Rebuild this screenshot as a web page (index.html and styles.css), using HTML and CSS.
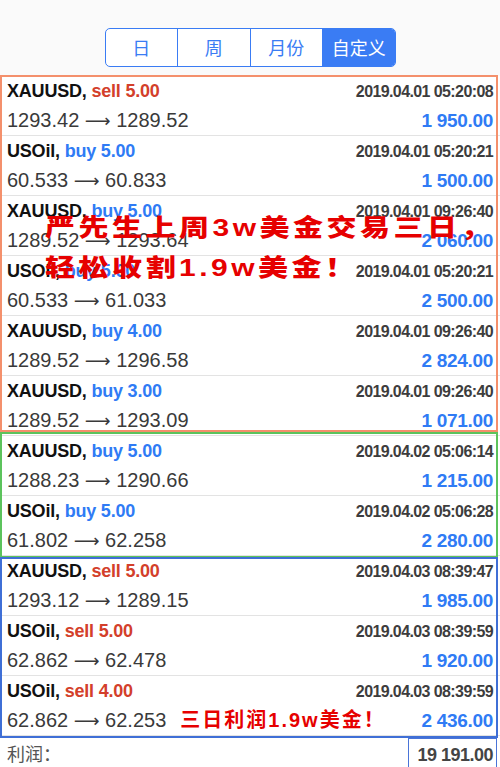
FILE: index.html
```html
<!DOCTYPE html>
<html lang="zh">
<head>
    <meta charset="UTF-8">
    <title>交易记录</title>
    <link rel="stylesheet" href="styles.css">
</head>
<body>
    <div class="top">
        <ul class="seg">
            <li>日</li>
            <li>周</li>
            <li>月份</li>
            <li class="on">自定义</li>
        </ul>
    </div>

    <div class="list">
        <div class="row">
            <div class="line1"><span class="sym">XAUUSD, <em class="sell">sell 5.00</em></span><span class="date">2019.04.01 05:20:08</span></div>
            <div class="line2"><span class="price">1293.42 <i>⟶</i> 1289.52</span><span class="amt">1 950.00</span></div>
        </div>
        <div class="row">
            <div class="line1"><span class="sym">USOil, <em class="buy">buy 5.00</em></span><span class="date">2019.04.01 05:20:21</span></div>
            <div class="line2"><span class="price">60.533 <i>⟶</i> 60.833</span><span class="amt">1 500.00</span></div>
        </div>
        <div class="row">
            <div class="line1"><span class="sym">XAUUSD, <em class="buy">buy 5.00</em></span><span class="date">2019.04.01 09:26:40</span></div>
            <div class="line2"><span class="price">1289.52 <i>⟶</i> 1293.64</span><span class="amt">2 060.00</span></div>
        </div>
        <div class="row">
            <div class="line1"><span class="sym">USOil, <em class="buy">buy 5.00</em></span><span class="date">2019.04.01 05:20:21</span></div>
            <div class="line2"><span class="price">60.533 <i>⟶</i> 61.033</span><span class="amt">2 500.00</span></div>
        </div>
        <div class="row">
            <div class="line1"><span class="sym">XAUUSD, <em class="buy">buy 4.00</em></span><span class="date">2019.04.01 09:26:40</span></div>
            <div class="line2"><span class="price">1289.52 <i>⟶</i> 1296.58</span><span class="amt">2 824.00</span></div>
        </div>
        <div class="row">
            <div class="line1"><span class="sym">XAUUSD, <em class="buy">buy 3.00</em></span><span class="date">2019.04.01 09:26:40</span></div>
            <div class="line2"><span class="price">1289.52 <i>⟶</i> 1293.09</span><span class="amt">1 071.00</span></div>
        </div>
        <div class="row">
            <div class="line1"><span class="sym">XAUUSD, <em class="buy">buy 5.00</em></span><span class="date">2019.04.02 05:06:14</span></div>
            <div class="line2"><span class="price">1288.23 <i>⟶</i> 1290.66</span><span class="amt">1 215.00</span></div>
        </div>
        <div class="row">
            <div class="line1"><span class="sym">USOil, <em class="buy">buy 5.00</em></span><span class="date">2019.04.02 05:06:28</span></div>
            <div class="line2"><span class="price">61.802 <i>⟶</i> 62.258</span><span class="amt">2 280.00</span></div>
        </div>
        <div class="row">
            <div class="line1"><span class="sym">XAUUSD, <em class="sell">sell 5.00</em></span><span class="date">2019.04.03 08:39:47</span></div>
            <div class="line2"><span class="price">1293.12 <i>⟶</i> 1289.15</span><span class="amt">1 985.00</span></div>
        </div>
        <div class="row">
            <div class="line1"><span class="sym">USOil, <em class="sell">sell 5.00</em></span><span class="date">2019.04.03 08:39:59</span></div>
            <div class="line2"><span class="price">62.862 <i>⟶</i> 62.478</span><span class="amt">1 920.00</span></div>
        </div>
        <div class="row">
            <div class="line1"><span class="sym">USOil, <em class="sell">sell 4.00</em></span><span class="date">2019.04.03 08:39:59</span></div>
            <div class="line2"><span class="price">62.862 <i>⟶</i> 62.253</span><span class="note">三日利润1.9w美金！</span><span class="amt">2 436.00</span></div>
        </div>

        <!-- 标注框 -->
        <div class="mark mark-orange"></div>
        <div class="mark mark-green"></div>
        <div class="mark mark-blue"></div>
        <div class="banner">严先生上周3w美金交易三日，<br>轻松收割1.9w美金！</div>
    </div>

    <div class="total">
        <span class="label">利润：</span>
        <span class="sum">19 191.00</span>
    </div>
</body>
</html>
```

FILE: styles.css
```css
*{
    margin: 0;
    padding: 0;
    list-style: none;
    box-sizing: border-box;
}
body{
    width: 500px;
    background: #fff;
    font-family: "Liberation Sans", "Noto Sans CJK SC", sans-serif;
    overflow: hidden;
}
.top{
    height: 76px;
    padding-top: 28px;
    background: #fafafa;
}
.seg{
    display: flex;
    width: 291px;
    height: 39px;
    margin: 0 auto;
    border: 1px solid #3a7cf4;
    border-radius: 5px;
    overflow: hidden;
    background: #fff;
}
.seg li{
    flex: 1;
    text-align: center;
    line-height: 37px;
    font-size: 18px;
    font-family: "Noto Sans CJK SC", sans-serif;
    color: #3a7cf4;
    border-left: 1px solid #3a7cf4;
}
.seg li:first-child{
    border-left: none;
}
.seg .on{
    background: #3a7cf4;
    color: #fff;
}

.list{
    position: relative;
}
.row{
    height: 60px;
    padding: 0 7px;
    border-bottom: 1px solid #e3e3e3;
}
.line1, .line2{
    display: flex;
    align-items: baseline;
}
.line1{
    height: 30px;
    line-height: 30px;
}
.line2{
    height: 29px;
    line-height: 28px;
}
.sym{
    font-size: 18px;
    font-weight: bold;
    color: #111;
    letter-spacing: -0.2px;
}
.sym em{
    font-style: normal;
}
.sell{
    color: #d33f2b;
}
.buy{
    color: #2f7bf5;
}
.date{
    margin-left: auto;
    font-size: 16px;
    font-weight: bold;
    color: #3d3d3d;
    letter-spacing: -0.6px;
}
.price{
    font-size: 20px;
    color: #3a3a3a;
}
.price i{
    font-style: normal;
    font-family: "DejaVu Sans", sans-serif;
    font-size: 18px;
}
.amt{
    margin-left: auto;
    font-size: 19px;
    font-weight: bold;
    color: #2f7bf5;
    letter-spacing: -0.3px;
}
.note{
    margin-left: 14px;
    font-family: "Liberation Sans", "Noto Sans CJK SC", sans-serif;
    font-size: 20px;
    font-weight: bold;
    color: #e60000;
    letter-spacing: 2px;
}

.mark{
    position: absolute;
    left: 0;
    width: 498px;
    border: 2px solid;
}
.mark-orange{
    top: -1px;
    height: 357px;
    border-color: #f4906c;
}
.mark-green{
    top: 356px;
    height: 126px;
    border-color: #5cc35c;
}
.mark-blue{
    top: 481px;
    height: 181px;
    border-color: #3f6fd6;
}
.banner{
    position: absolute;
    left: 45px;
    top: 132px;
    font-family: "Liberation Sans", "Noto Sans CJK SC", sans-serif;
    font-size: 30px;
    font-weight: 900;
    line-height: 50px;
    letter-spacing: 3.5px;
    color: #e60000;
    white-space: nowrap;
    transform: scaleY(0.8);
    transform-origin: left top;
}

.total{
    display: flex;
    align-items: flex-end;
    height: 31px;
    padding: 0 3px 0 7px;
}
.label{
    font-family: "Noto Sans CJK SC", sans-serif;
    font-size: 18px;
    color: #555;
    line-height: 28px;
}
.sum{
    margin-left: auto;
    height: 29px;
    padding: 6px 3px 0 8px;
    border: 1px solid #4a74d8;
    border-bottom: none;
    font-size: 18px;
    font-weight: bold;
    color: #444;
    letter-spacing: -0.5px;
}
```
